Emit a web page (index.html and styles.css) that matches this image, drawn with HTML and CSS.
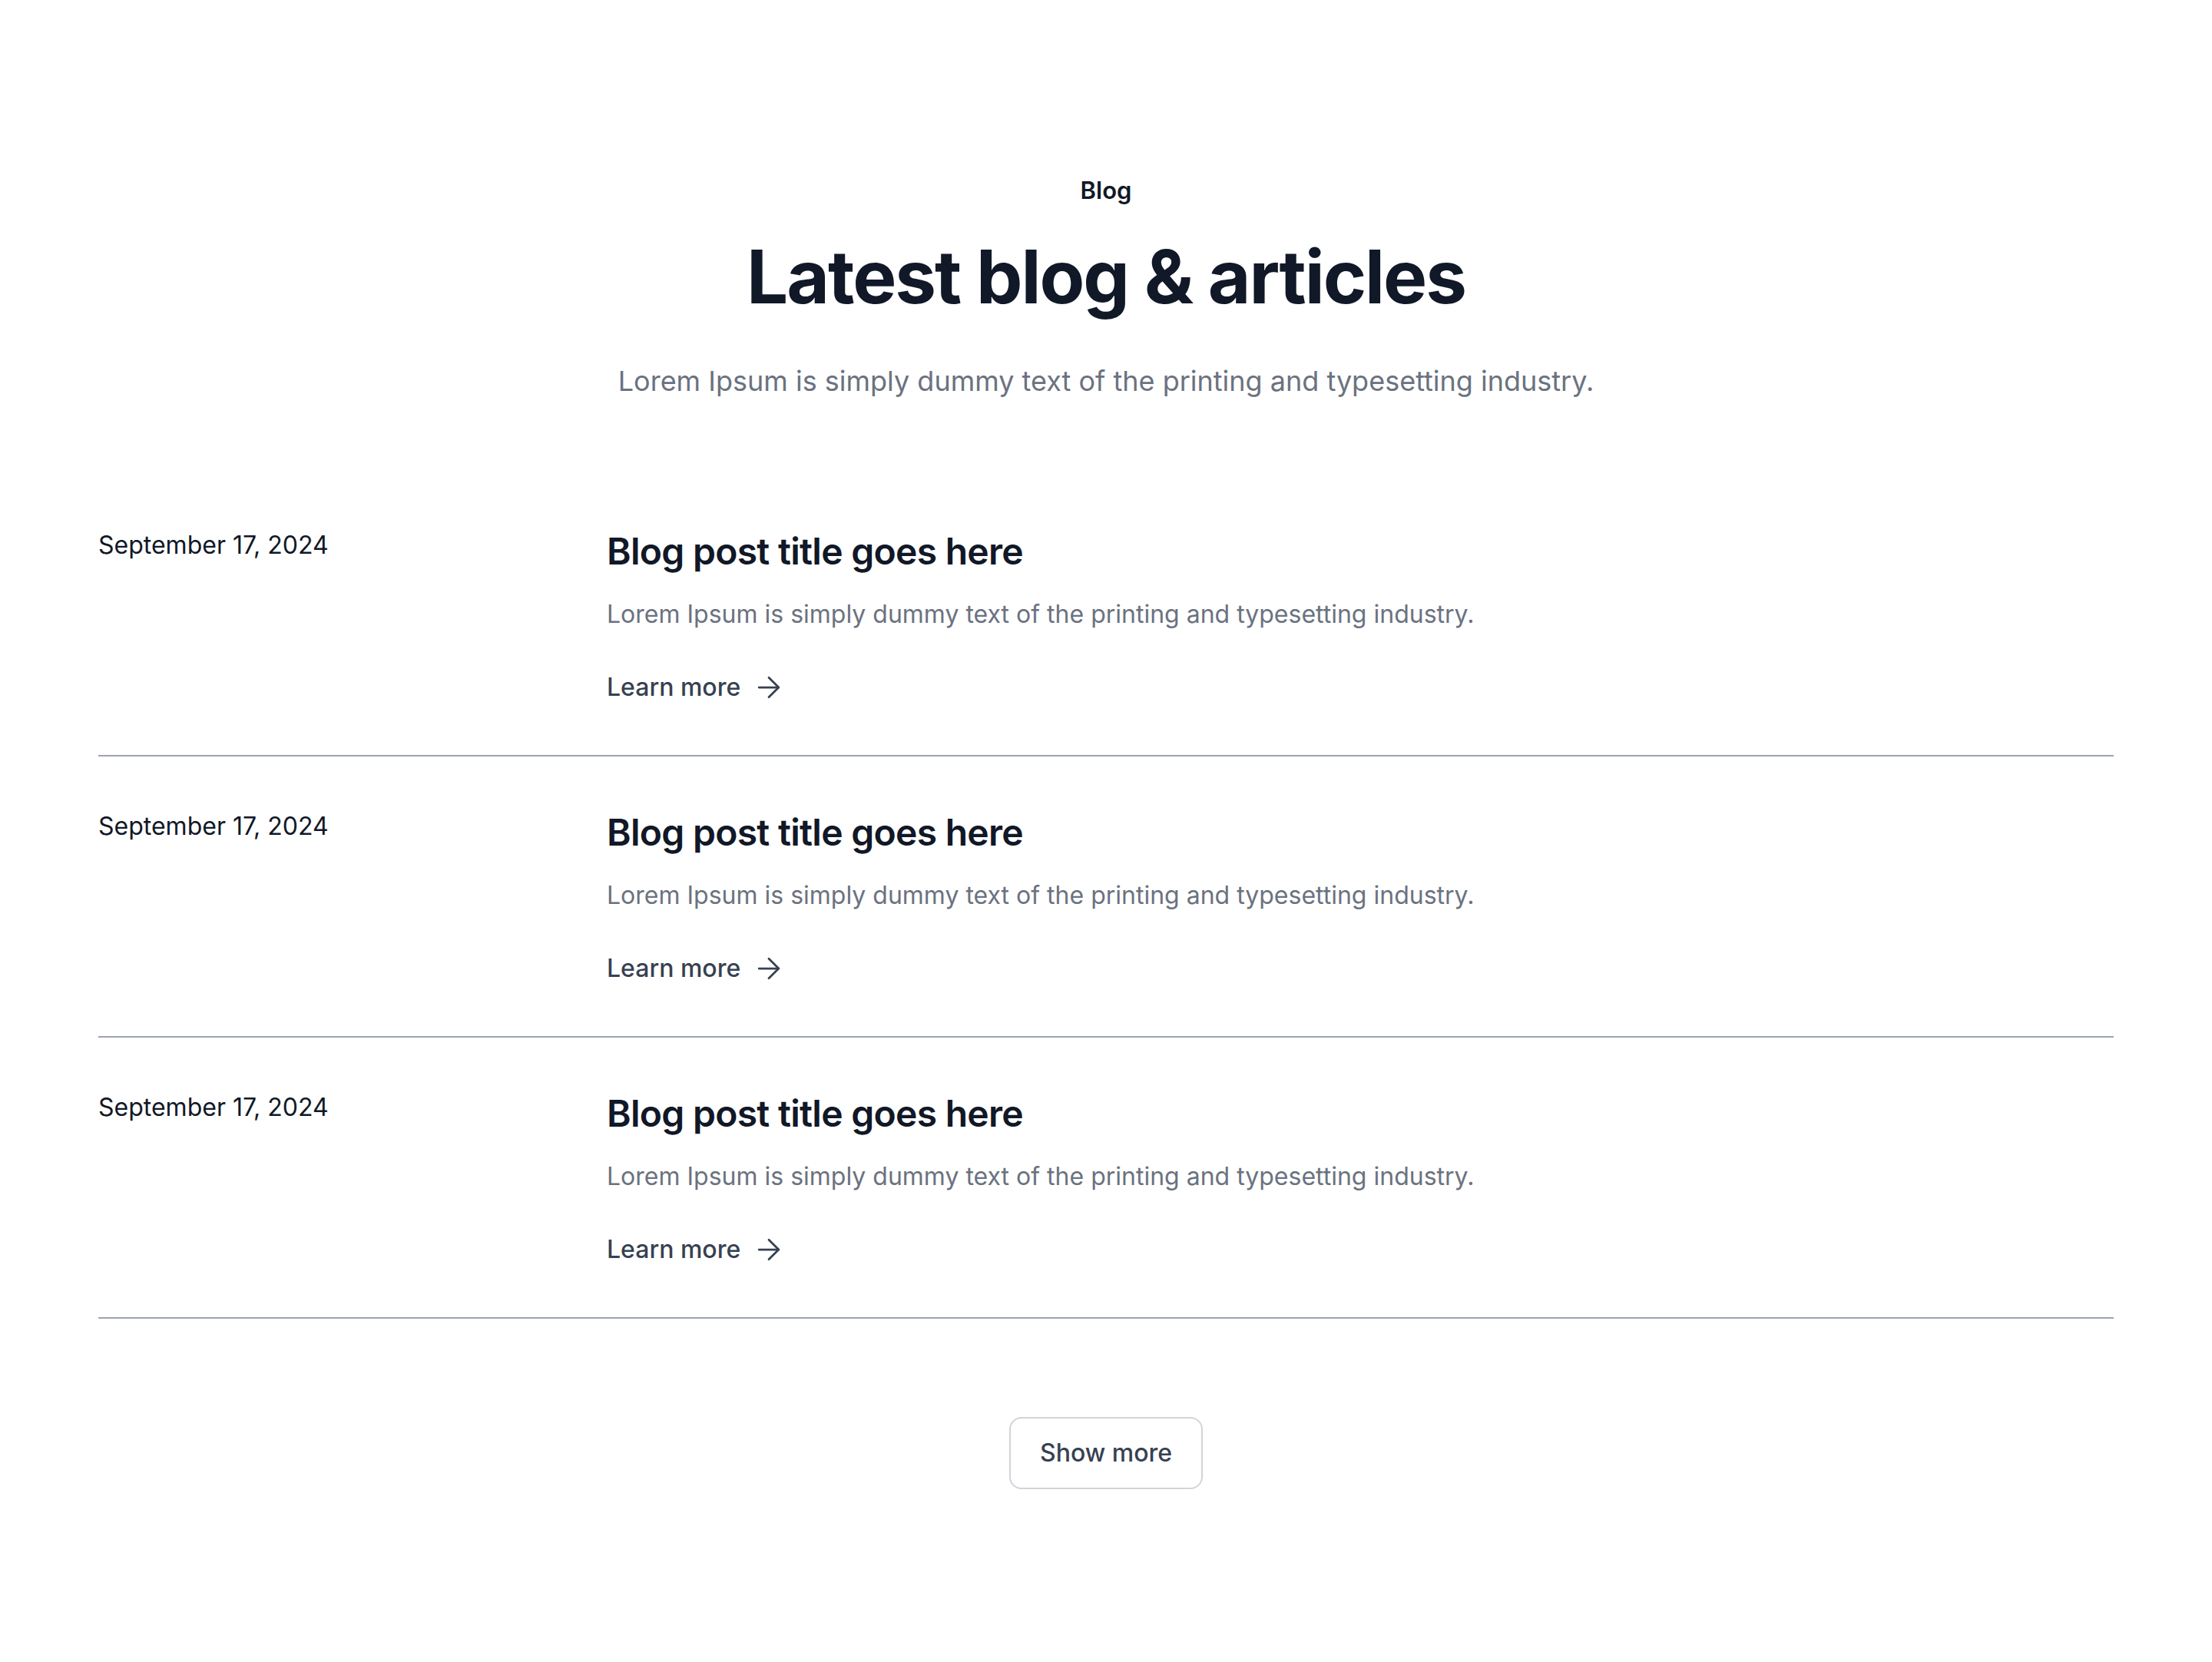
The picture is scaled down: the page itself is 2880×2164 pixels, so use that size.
FILE: index.html
```html
<!DOCTYPE html>
<html lang="en">
<head>
<meta charset="utf-8">
<title>Latest blog &amp; articles</title>
<link rel="stylesheet" href="styles.css">
</head>
<body>
<section class="blog">
  <header class="blog-header">
    <p class="eyebrow">Blog</p>
    <h1 class="heading">Latest blog &amp; articles</h1>
    <p class="lead">Lorem Ipsum is simply dummy text of the printing and typesetting industry.</p>
  </header>

  <div class="posts">
    <article class="post">
      <time class="post-date">September 17, 2024</time>
      <div class="post-body">
        <h2 class="post-title">Blog post title goes here</h2>
        <p class="post-desc">Lorem Ipsum is simply dummy text of the printing and typesetting industry.</p>
        <a class="post-link" href="#">Learn more
          <svg class="arrow" viewBox="0 0 24 24" fill="none" stroke="currentColor" stroke-width="1.5" stroke-linecap="round" stroke-linejoin="round"><path d="M5 12h14"/><path d="m12 5 7 7-7 7"/></svg>
        </a>
      </div>
    </article>
    <article class="post">
      <time class="post-date">September 17, 2024</time>
      <div class="post-body">
        <h2 class="post-title">Blog post title goes here</h2>
        <p class="post-desc">Lorem Ipsum is simply dummy text of the printing and typesetting industry.</p>
        <a class="post-link" href="#">Learn more
          <svg class="arrow" viewBox="0 0 24 24" fill="none" stroke="currentColor" stroke-width="1.5" stroke-linecap="round" stroke-linejoin="round"><path d="M5 12h14"/><path d="m12 5 7 7-7 7"/></svg>
        </a>
      </div>
    </article>
    <article class="post">
      <time class="post-date">September 17, 2024</time>
      <div class="post-body">
        <h2 class="post-title">Blog post title goes here</h2>
        <p class="post-desc">Lorem Ipsum is simply dummy text of the printing and typesetting industry.</p>
        <a class="post-link" href="#">Learn more
          <svg class="arrow" viewBox="0 0 24 24" fill="none" stroke="currentColor" stroke-width="1.5" stroke-linecap="round" stroke-linejoin="round"><path d="M5 12h14"/><path d="m12 5 7 7-7 7"/></svg>
        </a>
      </div>
    </article>
  </div>

  <div class="more">
    <button class="more-btn" type="button">Show more</button>
  </div>
</section>
</body>
</html>
```
FILE: styles.css
```css
* { box-sizing: border-box; }

html, body {
  margin: 0;
  padding: 0;
  background: #ffffff;
}

body {
  font-family: Inter, "Noto Sans", "Liberation Sans", sans-serif;
  color: #111827;
}

.blog {
  padding: 224px 128px 224px;
}

.blog-header {
  text-align: center;
}

.eyebrow {
  margin: 0;
  font-size: 31px;
  line-height: 48px;
  font-weight: 600;
  color: #111827;
}

.heading {
  margin: 40px 0 0;
  font-size: 96px;
  line-height: 96px;
  font-weight: 700;
  letter-spacing: -0.021em;
  color: #111827;
}

.lead {
  margin: 60px 0 0;
  font-size: 36px;
  line-height: 56px;
  color: #6b7280;
}

.posts {
  margin-top: 95px;
}

.post {
  display: grid;
  grid-template-columns: 630px 1fr;
  column-gap: 32px;
  padding: 67px 0 64px;
  border-bottom: 2px solid #9ca3af;
}

.post-date {
  font-size: 32px;
  line-height: 48px;
  color: #111827;
}

.post-body {
  display: flex;
  flex-direction: column;
  align-items: flex-start;
}

.post-title {
  margin: 0;
  font-size: 48px;
  line-height: 64px;
  font-weight: 600;
  letter-spacing: -0.015em;
  color: #111827;
}

.post-desc {
  margin: 26px 0 0;
  font-size: 32px;
  line-height: 48px;
  color: #6b7280;
}

.post-link {
  margin-top: 47px;
  display: inline-flex;
  align-items: center;
  gap: 15px;
  font-size: 32px;
  line-height: 48px;
  font-weight: 500;
  color: #374151;
  text-decoration: none;
}

.arrow {
  width: 44px;
  height: 44px;
}

.more {
  display: flex;
  justify-content: center;
  margin-top: 128px;
}

.more-btn {
  font-family: inherit;
  font-size: 32px;
  line-height: 48px;
  font-weight: 500;
  color: #374151;
  background: #ffffff;
  border: 2px solid #d1d5db;
  border-radius: 16px;
  padding: 21px 38px;
}
```
